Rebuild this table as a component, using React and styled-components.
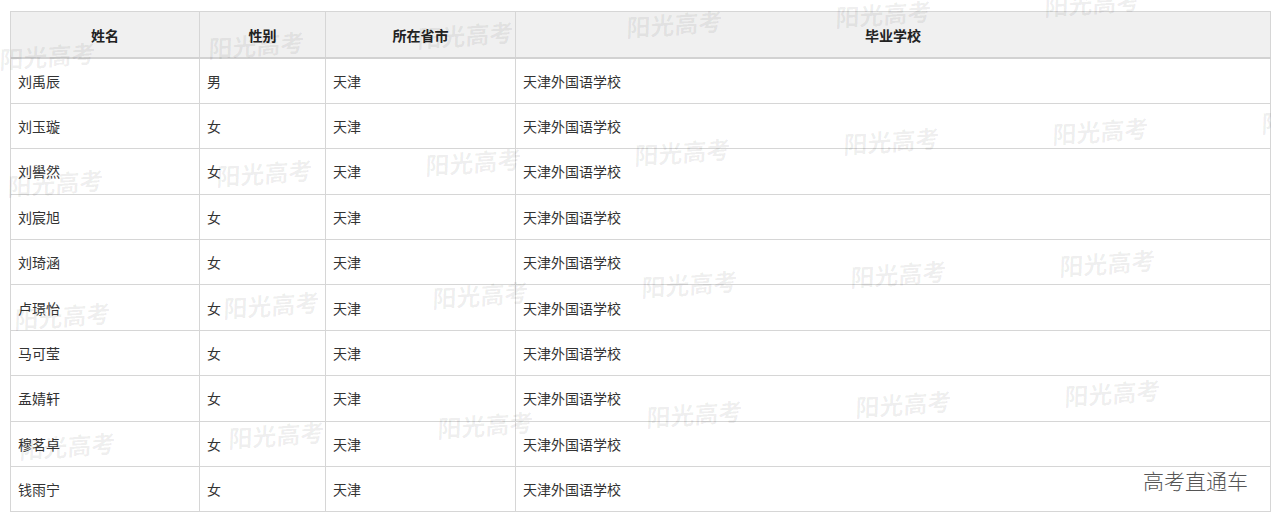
import React from "react";
import styled, { createGlobalStyle } from "styled-components";

const rows = [
  ["刘禹辰", "男"],
  ["刘玉璇", "女"],
  ["刘嚳然", "女"],
  ["刘宸旭", "女"],
  ["刘琦涵", "女"],
  ["卢璟怡", "女"],
  ["马可莹", "女"],
  ["孟婧轩", "女"],
  ["穆茗卓", "女"],
  ["钱雨宁", "女"],
];

// watermark grid: each band starts at the right and steps down-left
const bands = [
  { x: 1045, y: -4 },
  { x: 1262, y: 113 },
  { x: 1060, y: 256 },
  { x: 1065, y: 386 },
];

const marks = [];
bands.forEach((b, i) => {
  for (let k = 0; k < 7; k++) {
    marks.push({ key: `${i}-${k}`, left: b.x - 209 * k, top: b.y + 10.5 * k });
  }
});

const App = () => {
  return (
    <>
      <GlobalStyle />
      <Page>
        <Table>
          <colgroup>
            <col style={{ width: 189 }} />
            <col style={{ width: 126 }} />
            <col style={{ width: 190 }} />
            <col />
          </colgroup>
          <thead>
            <tr>
              <Th>姓名</Th>
              <Th>性别</Th>
              <Th>所在省市</Th>
              <Th>毕业学校</Th>
            </tr>
          </thead>
          <tbody>
            {rows.map(([name, sex]) => (
              <Row key={name}>
                <Td>{name}</Td>
                <Td>{sex}</Td>
                <Td>天津</Td>
                <Td>天津外国语学校</Td>
              </Row>
            ))}
          </tbody>
        </Table>
        <Watermarks>
          {marks.map((m) => (
            <Mark key={m.key} style={{ left: m.left, top: m.top }}>
              阳光高考
            </Mark>
          ))}
        </Watermarks>
        <Brand>高考直通车</Brand>
      </Page>
    </>
  );
};

export default App;

const GlobalStyle = createGlobalStyle`
  body {
    margin: 0;
    background: #fff;
    font-family: "Noto Sans CJK SC", "Liberation Sans", sans-serif;
  }
`;

const Page = styled.div`
  position: relative;
  width: 1280px;
  height: 518px;
  padding: 11px 9px 0 10px;
  box-sizing: border-box;
  overflow: hidden;
`;

const Table = styled.table`
  width: 1261px;
  border-collapse: collapse;
  table-layout: fixed;
  border: 1px solid #d6d6d6;
  font-size: 14px;
  color: #333;
`;

const Th = styled.th`
  height: 45px;
  padding: 0;
  background: #f0f0f0;
  border: 1px solid #d6d6d6;
  border-bottom: 2px solid #d2d2d2;
  font-weight: bold;
  text-align: center;
  color: #222;
`;

const Row = styled.tr`
  height: 45.4px;
`;

const Td = styled.td`
  padding: 0 0 0 7px;
  border: 1px solid #d6d6d6;
  text-align: left;
  vertical-align: middle;
`;

const Watermarks = styled.div`
  position: absolute;
  left: 0;
  top: 0;
  width: 1271px;
  height: 518px;
  overflow: hidden;
  pointer-events: none;
`;

const Mark = styled.span`
  position: absolute;
  font-family: "Liberation Serif", "Noto Sans CJK SC", serif;
  font-size: 24px;
  font-weight: bold;
  line-height: 24px;
  white-space: nowrap;
  color: rgba(0, 0, 0, 0.065);
  transform: rotate(-4deg) skewX(-6deg);
  transform-origin: left top;
`;

const Brand = styled.div`
  position: absolute;
  left: 1143px;
  top: 465px;
  font-size: 21px;
  font-weight: 300;
  color: #555;
`;
